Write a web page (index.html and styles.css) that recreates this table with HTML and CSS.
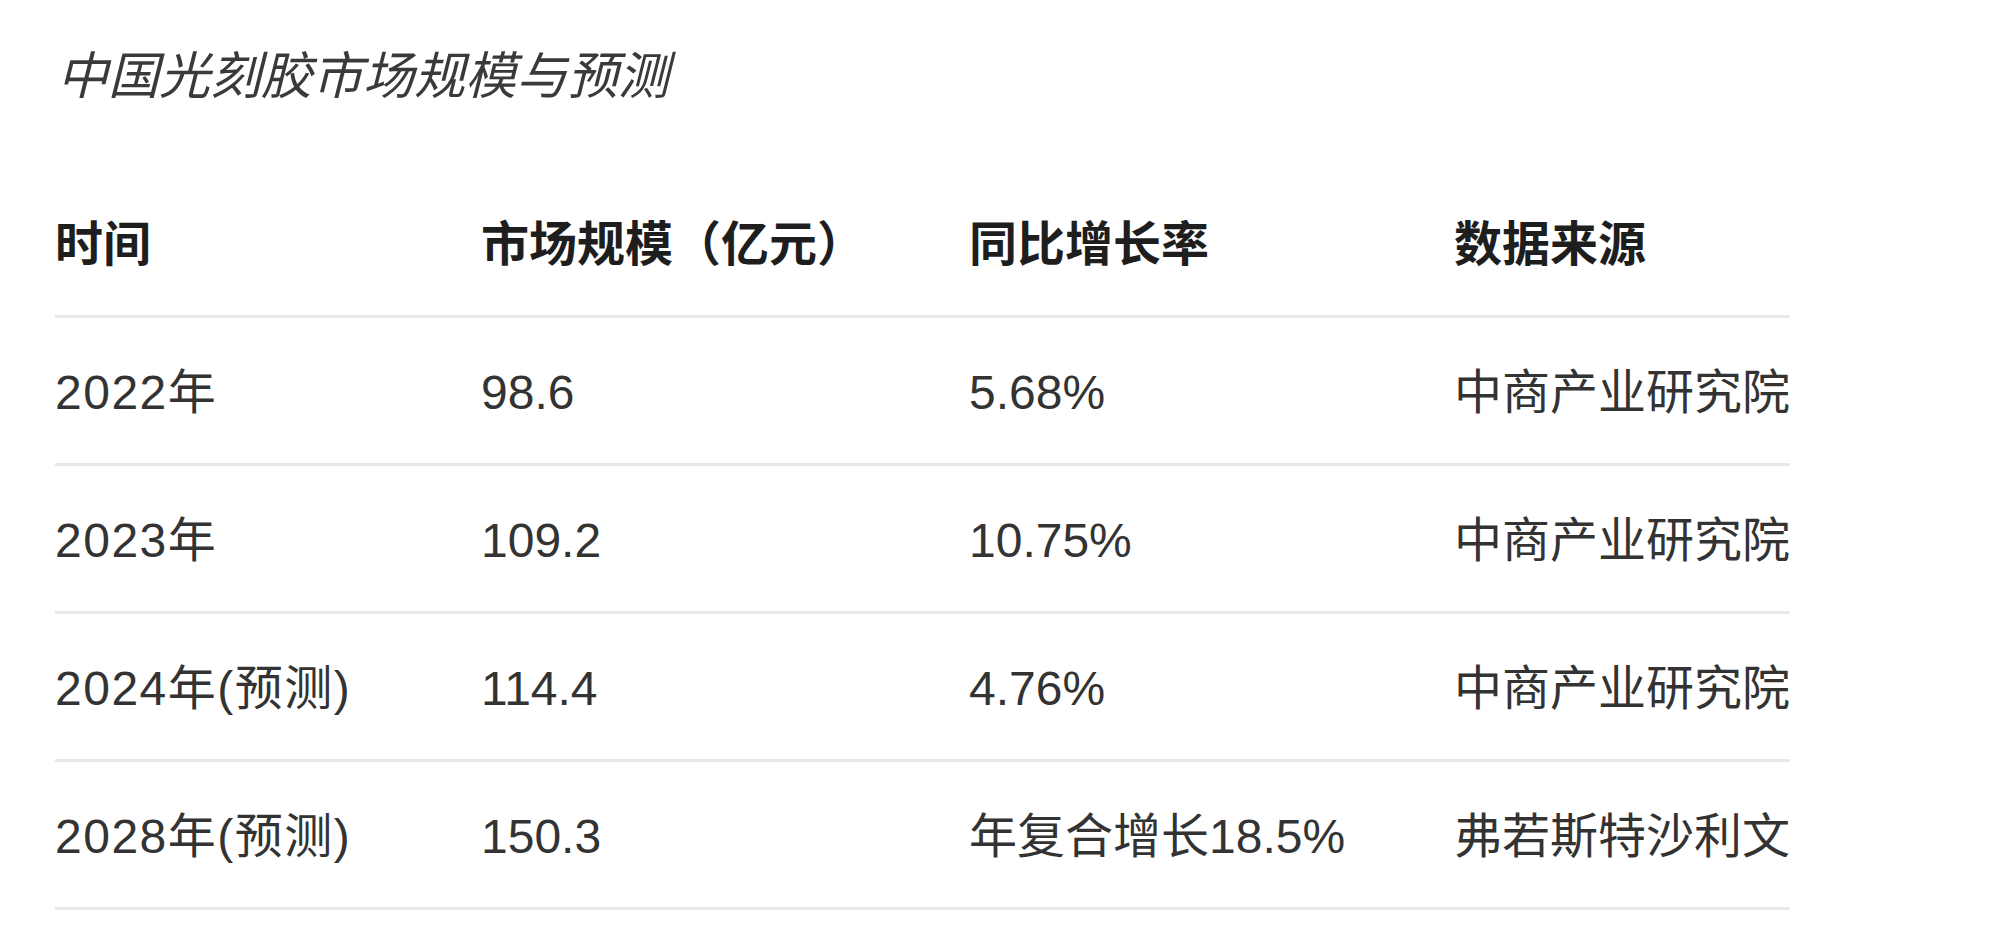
FILE: index.html
```html
<!DOCTYPE html>
<html lang="zh-CN">
<head>
<meta charset="utf-8">
<title>中国光刻胶市场规模与预测</title>
<link rel="stylesheet" href="styles.css">
</head>
<body>
<main class="page">
  <h2 class="caption">中国光刻胶市场规模与预测</h2>
  <table class="data">
    <colgroup>
      <col class="c1"><col class="c2"><col class="c3"><col class="c4">
    </colgroup>
    <thead>
      <tr><th>时间</th><th>市场规模（亿元）</th><th>同比增长率</th><th>数据来源</th></tr>
    </thead>
    <tbody>
      <tr><td>2022年</td><td>98.6</td><td>5.68%</td><td>中商产业研究院</td></tr>
      <tr><td>2023年</td><td>109.2</td><td>10.75%</td><td>中商产业研究院</td></tr>
      <tr><td>2024年(预测)</td><td>114.4</td><td>4.76%</td><td>中商产业研究院</td></tr>
      <tr><td>2028年(预测)</td><td>150.3</td><td>年复合增长18.5%</td><td>弗若斯特沙利文</td></tr>
    </tbody>
  </table>
</main>
</body>
</html>
```

FILE: styles.css
```css
html, body {
  margin: 0;
  padding: 0;
  background: #ffffff;
}

.page {
  padding: 39px 0 0 55px;
  font-family: "Liberation Sans", "Noto Sans CJK SC", sans-serif;
  color: #333333;
}

.caption {
  margin: 0 0 55px 2px;
  font-size: 51px;
  line-height: 76px;
  font-weight: 400;
  font-style: italic;
  color: #3a3a3a;
}

.data {
  border-collapse: collapse;
  table-layout: fixed;
  width: 1735px;
}

.c1 { width: 426px; }
.c2 { width: 488px; }
.c3 { width: 485px; }
.c4 { width: 336px; }

.data th,
.data td {
  height: 141px;
  padding: 4px 0 0 0;
  text-align: left;
  vertical-align: middle;
  font-size: 48px;
  line-height: 1.2;
  white-space: nowrap;
  border-bottom: 3px solid #e9e9e9;
}

.data th {
  font-weight: 700;
  color: #1e1e1e;
}

.data td {
  font-weight: 400;
  color: #333333;
}

.data td:first-child {
  letter-spacing: 1.5px;
}
```
